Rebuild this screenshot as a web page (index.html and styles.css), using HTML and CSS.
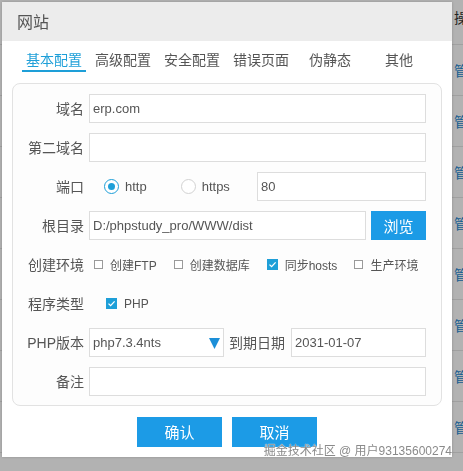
FILE: index.html
```html
<!DOCTYPE html>
<html lang="zh-CN">
<head>
    <meta charset="UTF-8">
    <title>网站</title>
    <link rel="stylesheet" href="styles.css">
</head>
<body>
    <div class="page">
        <div class="table-head">
            <span class="col-name">域名</span>
            <span class="col-op">操作</span>
        </div>
        <div class="table-row"><span class="col-op">管理</span></div>
        <div class="table-row"><span class="col-op">管理</span></div>
        <div class="table-row"><span class="col-op">管理</span></div>
        <div class="table-row"><span class="col-op">管理</span></div>
        <div class="table-row"><span class="col-op">管理</span></div>
        <div class="table-row"><span class="col-op">管理</span></div>
        <div class="table-row"><span class="col-op">管理</span></div>
        <div class="table-row"><span class="col-op">管理</span></div>
        <div class="table-row">
            <span class="col-name">erp.com</span>
            <span class="col-port">80</span>
            <span class="col-path">D:/phpstudy_pro/</span>
            <span class="col-state">正常</span>
            <span class="col-date">2031-01-07</span>
            <span class="col-op">管理</span>
        </div>
    </div>

    <div class="mask"></div>

    <div class="dialog">
        <div class="dialog-title">网站</div>

        <div class="tabs">
            <div class="tab active">基本配置</div>
            <div class="tab">高级配置</div>
            <div class="tab">安全配置</div>
            <div class="tab">错误页面</div>
            <div class="tab">伪静态</div>
            <div class="tab">其他</div>
        </div>

        <div class="panel">
            <div class="row">
                <label class="row-label">域名</label>
                <input class="field" type="text" value="erp.com">
            </div>
            <div class="row">
                <label class="row-label">第二域名</label>
                <input class="field" type="text" value="">
            </div>
            <div class="row">
                <label class="row-label">端口</label>
                <div class="radios">
                    <span class="radio checked"></span><span class="radio-text">http</span>
                    <span class="radio second"></span><span class="radio-text">https</span>
                </div>
                <input class="field port" type="text" value="80">
            </div>
            <div class="row">
                <label class="row-label">根目录</label>
                <input class="field" type="text" value="D:/phpstudy_pro/WWW/dist">
                <button class="btn browse">浏览</button>
            </div>
            <div class="row">
                <label class="row-label">创建环境</label>
                <div class="checks">
                    <span class="check-item"><span class="box"></span>创建FTP</span>
                    <span class="check-item"><span class="box"></span>创建数据库</span>
                    <span class="check-item"><span class="box on"><svg width="11" height="11" viewBox="0 0 11 11"><path d="M2.5 5.6 L4.6 7.6 L8.6 3.4" fill="none" stroke="#fff" stroke-width="1.3"/></svg></span>同步hosts</span>
                    <span class="check-item"><span class="box"></span>生产环境</span>
                </div>
            </div>
            <div class="row">
                <label class="row-label">程序类型</label>
                <div class="checks single">
                    <span class="check-item"><span class="box on"><svg width="11" height="11" viewBox="0 0 11 11"><path d="M2.5 5.6 L4.6 7.6 L8.6 3.4" fill="none" stroke="#fff" stroke-width="1.3"/></svg></span>PHP</span>
                </div>
            </div>
            <div class="row">
                <label class="row-label">PHP版本</label>
                <div class="select">
                    <span>php7.3.4nts</span>
                    <svg class="arrow" width="11" height="11" viewBox="0 0 11 11"><path d="M0 0 H11 L5.5 11 Z" fill="#1c8fd8"/></svg>
                </div>
                <span class="inline-label">到期日期</span>
                <input class="field" type="text" value="2031-01-07">
            </div>
            <div class="row">
                <label class="row-label">备注</label>
                <input class="field" type="text" value="">
            </div>
        </div>

        <div class="actions">
            <button class="btn">确认</button>
            <button class="btn">取消</button>
        </div>
    </div>

    <div class="watermark">掘金技术社区 @ 用户93135600274</div>
</body>
</html>
```

FILE: styles.css
```css
body {
    margin: 0;
    font-family: "Liberation Sans", "Noto Sans CJK SC", sans-serif;
    background-color: #fff;
    color: #555;
    overflow: hidden;
}
.page {
    width: 463px;
    height: 471px;
    overflow: hidden;
}
.table-head {
    height: 45px;
    display: flex;
    padding-top: 7px;
    box-sizing: border-box;
    font-size: 14px;
    color: #333;
    border-bottom: 1px solid #e6e6e6;
}
.table-row {
    height: 50px;
    display: flex;
    align-items: center;
    font-size: 14px;
    color: #666;
    border-bottom: 1px solid #e6e6e6;
}
.table-row:last-child {
    align-items: flex-start;
    padding-top: 16px;
    box-sizing: border-box;
}
.col-name { width: 100px; padding-left: 13px; }
.col-port { width: 39px; }
.col-path { width: 141px; }
.col-state { width: 50px; }
.col-date { width: 61px; }
.col-op {
    margin-left: auto;
    width: 9px;
    overflow: hidden;
    white-space: nowrap;
}
.table-row .col-op {
    color: #1e88d0;
}
.table-head .col-name {
    visibility: hidden;
}
.mask {
    position: fixed;
    left: 0;
    top: 0;
    right: 0;
    bottom: 0;
    background-color: rgba(0, 0, 0, 0.3);
}
.dialog {
    position: fixed;
    left: 2px;
    top: 2px;
    width: 450px;
    height: 455px;
    background-color: #fff;
    box-shadow: 0 0 3px rgba(0, 0, 0, 0.2);
}
.dialog-title {
    height: 39px;
    line-height: 42px;
    padding-left: 15px;
    background-color: #ececec;
    font-size: 16px;
    color: #555;
}
.tabs {
    display: flex;
    gap: 5px;
    padding: 9px 0 0 20px;
}
.tab {
    width: 64px;
    text-align: center;
    font-size: 14px;
    line-height: 20px;
    color: #555;
    border-bottom: 2px solid transparent;
}
.tab.active {
    color: #1e9fd8;
    border-bottom-color: #1e9fd8;
}
.panel {
    margin: 11px 10px 0;
    border: 1px solid #e2e2e2;
    border-radius: 8px;
    padding: 10px 15px 9px 0;
    display: flex;
    flex-direction: column;
    gap: 10px;
    background-color: #fdfdfd;
}
.row {
    display: flex;
    align-items: center;
    height: 29px;
}
.row-label {
    width: 71px;
    flex: none;
    margin-right: 5px;
    padding-bottom: 2px;
    text-align: right;
    font-size: 14px;
    color: #555;
}
.field {
    flex: 1;
    min-width: 0;
    height: 29px;
    box-sizing: border-box;
    border: 1px solid #ddd;
    padding: 0 3px;
    font-family: inherit;
    font-size: 13px;
    color: #555;
    background-color: #fff;
    outline: none;
}
.field.port {
    flex: none;
    width: 169px;
    margin-left: auto;
}
.radios {
    display: flex;
    align-items: center;
    margin-left: 15px;
}
.radio {
    width: 15px;
    height: 15px;
    box-sizing: border-box;
    border-radius: 50%;
    border: 1px solid #d2d2d2;
    background-color: #fff;
    margin-right: 6px;
    position: relative;
}
.radio.checked {
    border-color: #1e9fd8;
}
.radio.checked::after {
    content: "";
    position: absolute;
    left: 3px;
    top: 3px;
    width: 7px;
    height: 7px;
    border-radius: 50%;
    background-color: #1e9fd8;
}
.radio.second {
    margin-left: 34px;
}
.radio-text {
    font-size: 13px;
    color: #555;
}
.btn {
    height: 30px;
    border: none;
    background-color: #1c9be6;
    color: #fff;
    font-family: inherit;
    font-size: 15px;
    padding: 0;
    cursor: pointer;
}
.btn.browse {
    width: 55px;
    height: 29px;
    margin-left: 5px;
}
.checks {
    display: flex;
    align-items: center;
    gap: 17px;
    margin-left: 5px;
}
.checks.single {
    margin-left: 17px;
}
.check-item {
    display: flex;
    align-items: center;
    gap: 7px;
    font-size: 12px;
    color: #555;
    white-space: nowrap;
}
.box {
    width: 9px;
    height: 9px;
    box-sizing: border-box;
    border: 1px solid #9a9a9a;
    background-color: #fff;
}
.box.on {
    width: 11px;
    height: 11px;
    border: none;
    background-color: #1e9fd8;
    display: flex;
}
.select {
    width: 135px;
    height: 29px;
    box-sizing: border-box;
    border: 1px solid #ddd;
    background-color: #fff;
    display: flex;
    align-items: center;
    justify-content: space-between;
    padding: 0 3px 0 3px;
    font-size: 13px;
    color: #555;
}
.arrow {
    margin-top: 1px;
}
.inline-label {
    font-size: 14px;
    color: #555;
    margin: 0 6px 0 5px;
    padding-bottom: 2px;
}
.actions {
    display: flex;
    justify-content: center;
    gap: 10px;
    margin-top: 11px;
}
.actions .btn {
    width: 85px;
    padding-bottom: 2px;
}
.watermark {
    position: fixed;
    right: 11px;
    bottom: 13px;
    font-size: 12px;
    color: #8a8a8a;
    text-shadow: 0 0 1px #fff, 0 0 1px #fff;
}
```
